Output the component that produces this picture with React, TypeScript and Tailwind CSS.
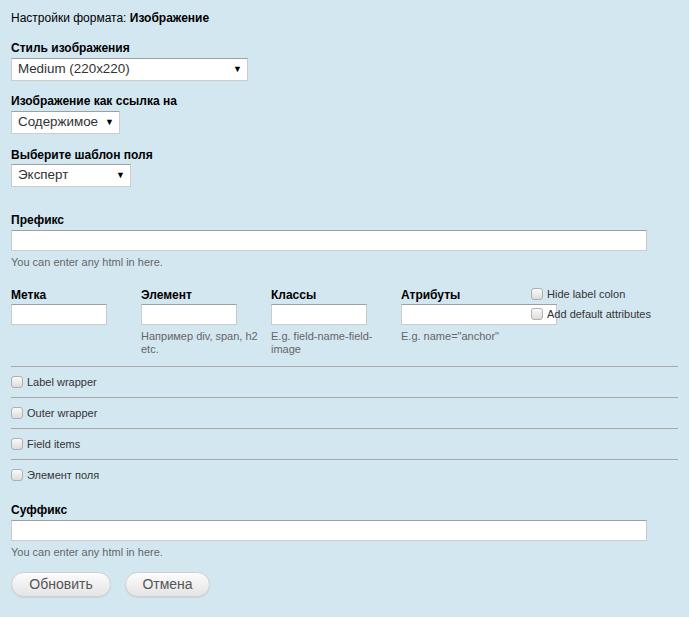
import React from "react";

const font = { fontFamily: '"Liberation Sans", Arial, sans-serif' };

function Select({ w, text }: { w: string; text: string }) {
  return (
    <div
      className={`${w} h-[23px] bg-white border border-[#cccccc] border-t-[#a0a0a0] flex items-center justify-between pl-[6px] pr-[5px] text-[13.4px] text-[#333]`}
    >
      <span>{text}</span>
      <span className="text-[9px] text-black leading-none">▼</span>
    </div>
  );
}

function Input({ w }: { w: string }) {
  return (
    <div className={`${w} h-[21px] bg-white border border-[#cccccc] border-t-[#a0a0a0] border-r-[#c8c8c8]`} />
  );
}

function Check() {
  return (
    <span className="inline-block w-[12px] h-[12px] rounded-[3px] border border-[#b0b0b0] bg-gradient-to-b from-[#fafafa] to-[#dcdcdc] shrink-0" />
  );
}

function CheckRow({ label }: { label: string }) {
  return (
    <div className="flex items-center gap-[4px] h-[30px] text-[11px] text-[#333]">
      <Check />
      <span>{label}</span>
    </div>
  );
}

function Label({ children }: { children: React.ReactNode }) {
  return <div className="text-[12px] font-bold text-black leading-[14px] pt-[1px]">{children}</div>;
}

function Help({ children }: { children: React.ReactNode }) {
  return <div className="text-[11px] text-[#666] leading-[13px]">{children}</div>;
}

function Button({ children, w }: { children: React.ReactNode; w: string }) {
  return (
    <div
      className={`${w} h-[25px] rounded-full border border-[#d0d0d0] bg-gradient-to-b from-[#fcfcfc] to-[#e4e4e4] flex items-center justify-center text-[14px] text-[#555] shadow-[0_1px_1px_rgba(0,0,0,0.08)]`}
    >
      {children}
    </div>
  );
}

export default function App() {
  return (
    <div style={font} className="w-[689px] min-h-[618px] bg-white">
      <div className="h-[617px] bg-[#d3e7f1] px-[11px] pt-[11px]">
        <div className="text-[12px] leading-[14px] text-black">
          Настройки формата: <span className="font-bold">Изображение</span>
        </div>

        <div className="mt-[15px]">
          <Label>Стиль изображения</Label>
          <div className="mt-[3px]">
            <Select w="w-[237px]" text="Medium (220x220)" />
          </div>
        </div>

        <div className="mt-[12px]">
          <Label>Изображение как ссылка на</Label>
          <div className="mt-[3px]">
            <Select w="w-[109px]" text="Содержимое" />
          </div>
        </div>

        <div className="mt-[13px]">
          <Label>Выберите шаблон поля</Label>
          <div className="mt-[2px]">
            <Select w="w-[120px]" text="Эксперт" />
          </div>
        </div>

        <div className="mt-[25px]">
          <Label>Префикс</Label>
          <div className="mt-[3px]">
            <Input w="w-[636px]" />
          </div>
          <div className="mt-[5px]">
            <Help>You can enter any html in here.</Help>
          </div>
        </div>

        <div className="mt-[18px] flex relative">
          <div className="w-[130px]">
            <Label>Метка</Label>
            <div className="mt-[2px]">
              <Input w="w-[96px]" />
            </div>
          </div>
          <div className="w-[130px]">
            <Label>Элемент</Label>
            <div className="mt-[2px]">
              <Input w="w-[96px]" />
            </div>
            <div className="mt-[5px] w-[126px]">
              <Help>Например div, span, h2 etc.</Help>
            </div>
          </div>
          <div className="w-[130px]">
            <Label>Классы</Label>
            <div className="mt-[2px]">
              <Input w="w-[96px]" />
            </div>
            <div className="mt-[5px] w-[110px]">
              <Help>E.g. field-name-field-image</Help>
            </div>
          </div>
          <div className="w-[130px]">
            <Label>Атрибуты</Label>
            <div className="mt-[2px]">
              <Input w="w-[156px]" />
            </div>
            <div className="mt-[5px]">
              <Help>E.g. name="anchor"</Help>
            </div>
          </div>
          <div className="absolute left-[520px] top-[1px] flex flex-col gap-[8px] text-[11px] text-[#333]">
            <div className="flex items-center gap-[4px] h-[12px]">
              <Check />
              <span>Hide label colon</span>
            </div>
            <div className="flex items-center gap-[4px] h-[12px]">
              <Check />
              <span>Add default attributes</span>
            </div>
          </div>
        </div>

        <div className="mt-[10px] w-[667px]">
          <div className="border-t border-[#a8a8a8]" />
          <CheckRow label="Label wrapper" />
          <div className="border-t border-[#a8a8a8]" />
          <CheckRow label="Outer wrapper" />
          <div className="border-t border-[#a8a8a8]" />
          <CheckRow label="Field items" />
          <div className="border-t border-[#a8a8a8]" />
          <CheckRow label="Элемент поля" />
        </div>

        <div className="mt-[12px]">
          <Label>Суффикс</Label>
          <div className="mt-[3px]">
            <Input w="w-[636px]" />
          </div>
          <div className="mt-[5px]">
            <Help>You can enter any html in here.</Help>
          </div>
        </div>

        <div className="mt-[13px] flex gap-[14px]">
          <Button w="w-[100px]">Обновить</Button>
          <Button w="w-[85px]">Отмена</Button>
        </div>
      </div>
    </div>
  );
}
